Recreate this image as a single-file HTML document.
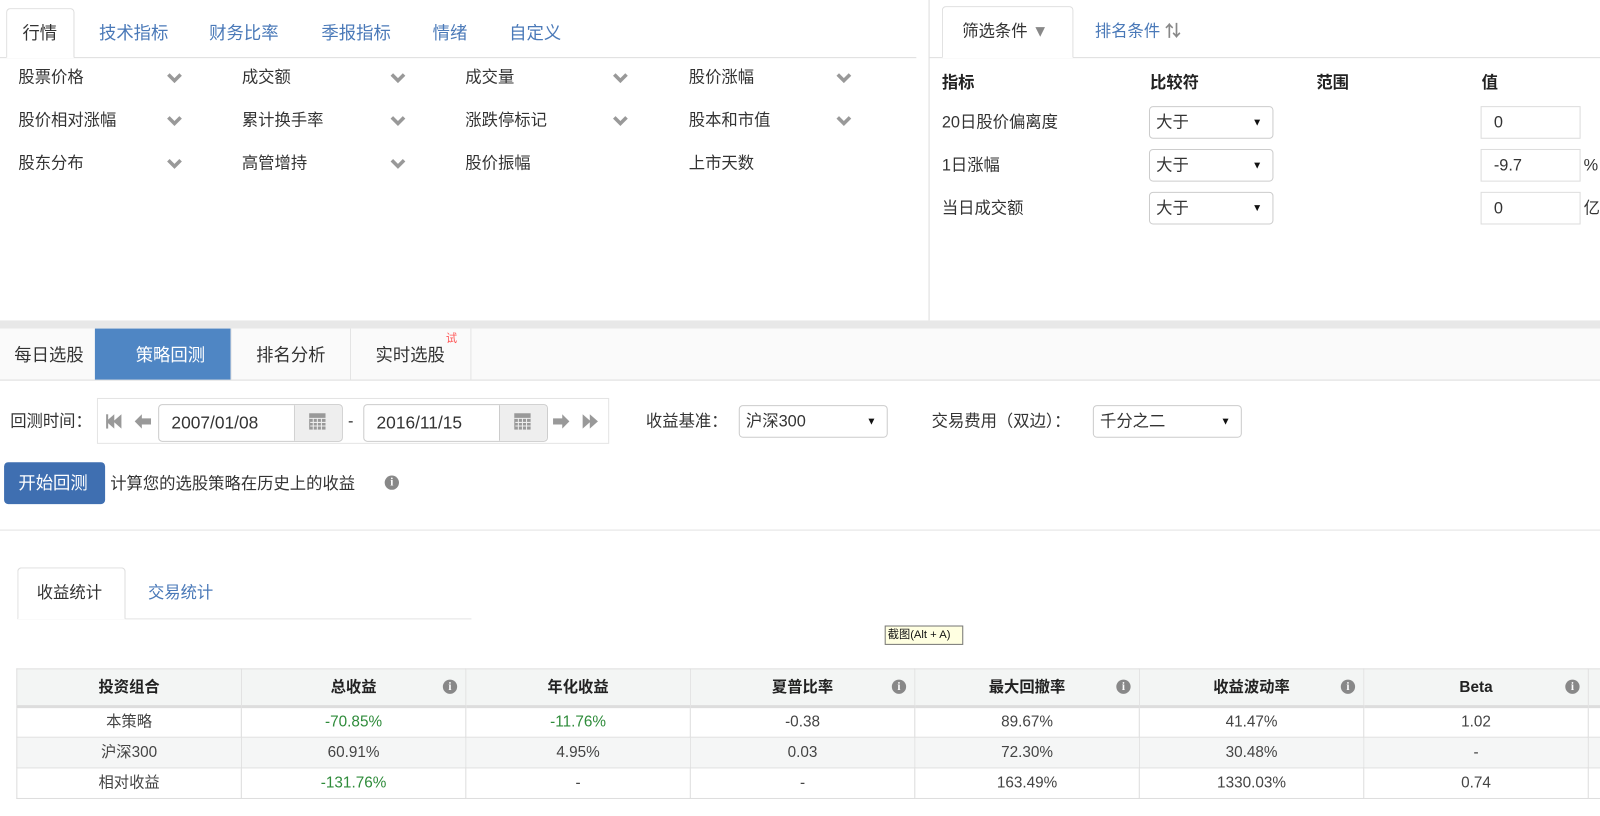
<!DOCTYPE html>
<html><head><meta charset="utf-8">
<style>
*{box-sizing:border-box;margin:0;padding:0}
html,body{width:1600px;height:816px;overflow:hidden;background:#fff}
body{font-family:"Liberation Sans","Noto Sans CJK SC",sans-serif;font-size:16px;color:#333;line-height:1.3}
#w{position:absolute;left:0;top:0;width:1568px;height:800px;transform:scale(1.0204);transform-origin:0 0}
.a{position:absolute;white-space:nowrap}
.blue{color:#4a79b8}
.sel{position:absolute;border:1px solid #ccc;border-radius:4px;background:#fff;height:32px;padding:0 6px;line-height:32px;font-size:16px}
.sel:after{content:"▼";position:absolute;right:10px;top:0;font-size:10px;color:#111}
.inp{position:absolute;border:1px solid #ddd;background:#fff;height:32px;padding:0 12px;line-height:32px}
.info{display:inline-block;width:14px;height:14px;border-radius:50%;background:#888;color:#fff;font-size:11px;font-weight:bold;text-align:center;line-height:14px;font-family:"Liberation Serif",serif}
table{position:absolute;left:16px;top:655px;border-collapse:collapse;font-size:15px;table-layout:fixed;width:1760px}
td,th{border:1px solid #ddd;width:220px;text-align:center;height:30px;position:relative}
th{background:#f3f5f4;height:37px;font-weight:bold;color:#222;border-bottom:3px solid #ddd}
th .info{position:absolute;right:8px;top:10px}
tr.g td{background:#f5f6f6}
.gr{color:#2e8b3a}
td{color:#444}
</style></head><body><div id="w">
<div class="a" style="left:6px;top:8px;width:67px;height:49px;border:1px solid #ddd;border-bottom:1px solid #fff;border-radius:4px 4px 0 0;background:#fff;z-index:2"></div>
<div class="a" style="left:0;top:56px;width:898px;height:1px;background:#ddd"></div>
<div class="a" style="left:22px;top:22px;z-index:3;font-size:17px">行情</div>
<div class="a blue" style="left:97px;top:22px;font-size:17px">技术指标</div>
<div class="a blue" style="left:205px;top:22px;font-size:17px">财务比率</div>
<div class="a blue" style="left:315px;top:22px;font-size:17px">季报指标</div>
<div class="a blue" style="left:424px;top:22px;font-size:17px">情绪</div>
<div class="a blue" style="left:499px;top:22px;font-size:17px">自定义</div>
<div class="a" style="left:910px;top:0;width:1px;height:314px;background:#ddd"></div>
<div class="a" style="left:18px;top:67px">股票价格</div>
<div class="a" style="left:237px;top:67px">成交额</div>
<div class="a" style="left:456px;top:67px">成交量</div>
<div class="a" style="left:675px;top:67px">股价涨幅</div>
<div class="a" style="left:18px;top:109px">股价相对涨幅</div>
<div class="a" style="left:237px;top:109px">累计换手率</div>
<div class="a" style="left:456px;top:109px">涨跌停标记</div>
<div class="a" style="left:675px;top:109px">股本和市值</div>
<div class="a" style="left:18px;top:151px">股东分布</div>
<div class="a" style="left:237px;top:151px">高管增持</div>
<div class="a" style="left:456px;top:151px">股价振幅</div>
<div class="a" style="left:675px;top:151px">上市天数</div>
<svg class="a" style="left:0;top:0" width="900" height="200">
<g fill="none" stroke="#999" stroke-width="3.5">
<path d="M165 73 l6 6 l6 -6"/><path d="M384 73 l6 6 l6 -6"/><path d="M602 73 l6 6 l6 -6"/><path d="M821 73 l6 6 l6 -6"/>
<path d="M165 115 l6 6 l6 -6"/><path d="M384 115 l6 6 l6 -6"/><path d="M602 115 l6 6 l6 -6"/><path d="M821 115 l6 6 l6 -6"/>
<path d="M165 157 l6 6 l6 -6"/><path d="M384 157 l6 6 l6 -6"/>
</g></svg>
<div class="a" style="left:923px;top:6px;width:129px;height:51px;border:1px solid #ddd;border-bottom:1px solid #fff;border-radius:4px 4px 0 0;background:#fff;z-index:2"></div>
<div class="a" style="left:911px;top:56px;width:689px;height:1px;background:#ddd"></div>
<div class="a" style="left:943px;top:22px;z-index:3">筛选条件 <span style="color:#888">▼</span></div>
<div class="a blue" style="left:1073px;top:22px">排名条件 <span style="color:#888;font-weight:bold">⇅</span></div>
<div class="a" style="left:923px;top:72px;font-weight:bold;color:#222">指标</div>
<div class="a" style="left:1127px;top:72px;font-weight:bold;color:#222">比较符</div>
<div class="a" style="left:1290px;top:72px;font-weight:bold;color:#222">范围</div>
<div class="a" style="left:1452px;top:72px;font-weight:bold;color:#222">值</div>
<div class="a" style="left:923px;top:111px">20日股价偏离度</div>
<div class="a" style="left:923px;top:153px">1日涨幅</div>
<div class="a" style="left:923px;top:195px">当日成交额</div>
<div class="sel" style="left:1126px;top:104px;width:122px">大于</div>
<div class="sel" style="left:1126px;top:146px;width:122px">大于</div>
<div class="sel" style="left:1126px;top:188px;width:122px">大于</div>
<div class="inp" style="left:1451px;top:104px;width:98px">0</div>
<div class="inp" style="left:1451px;top:146px;width:98px">-9.7</div>
<div class="inp" style="left:1451px;top:188px;width:98px">0</div>
<div class="a" style="left:1552px;top:153px">%</div>
<div class="a" style="left:1552px;top:195px">亿</div>
<div class="a" style="left:0;top:314px;width:1600px;height:8px;background:#e8e8e8"></div>
<div class="a" style="left:0;top:322px;width:1600px;height:51px;background:#fafafa;border-bottom:1px solid #ddd"></div>
<div class="a" style="left:93px;top:322px;width:133px;height:50px;background:#4f86c4"></div>
<div class="a" style="left:226px;top:322px;width:1px;height:50px;background:#e4e4e4"></div>
<div class="a" style="left:343px;top:322px;width:1px;height:50px;background:#e4e4e4"></div>
<div class="a" style="left:461px;top:322px;width:1px;height:50px;background:#e4e4e4"></div>
<div class="a" style="left:14px;top:338px;font-size:17px">每日选股</div>
<div class="a" style="left:133px;top:338px;font-size:17px;color:#fff">策略回测</div>
<div class="a" style="left:251px;top:338px;font-size:17px">排名分析</div>
<div class="a" style="left:368px;top:338px;font-size:17px">实时选股</div>
<div class="a" style="left:437px;top:325px;font-size:11px;color:#f55">试</div>
<div class="a" style="left:10px;top:404px">回测时间：</div>
<div class="a" style="left:95px;top:390px;width:502px;height:45px;border:1px solid #e4e4e4"></div>
<svg class="a" style="left:100px;top:400px" width="55" height="26"><g fill="#999"><path d="M4 13 l8 -7 v14z M11 13 l8 -7 v14z"/><rect x="4" y="6" width="2" height="14"/><path d="M32 13 l7 -7 v4 h9 v6 h-9 v4z"/></g></svg>
<div class="a" style="left:155px;top:396px;width:181px;height:37px;border:1px solid #ccc;border-radius:4px;background:#fff;padding:0 12px;line-height:35px;font-size:17px">2007/01/08</div>
<div class="a" style="left:288px;top:397px;width:47px;height:35px;background:#eee;border-left:1px solid #ccc;border-radius:0 4px 4px 0"></div>
<div class="a" style="left:341px;top:404px">-</div>
<div class="a" style="left:356px;top:396px;width:181px;height:37px;border:1px solid #ccc;border-radius:4px;background:#fff;padding:0 12px;line-height:35px;font-size:17px">2016/11/15</div>
<div class="a" style="left:489px;top:397px;width:47px;height:35px;background:#eee;border-left:1px solid #ccc;border-radius:0 4px 4px 0"></div>
<svg class="a" style="left:302px;top:404px" width="20" height="20"><rect x="1" y="1" width="16" height="16" fill="#999"/><g stroke="#eee" stroke-width="1"><path d="M1 6h16M2 10h15M2 13.5h15M5 6v11M9 6v11M13 6v11"/></g></svg>
<svg class="a" style="left:503px;top:404px" width="20" height="20"><rect x="1" y="1" width="16" height="16" fill="#999"/><g stroke="#eee" stroke-width="1"><path d="M1 6h16M2 10h15M2 13.5h15M5 6v11M9 6v11M13 6v11"/></g></svg>
<svg class="a" style="left:540px;top:400px" width="55" height="26"><g fill="#999"><path d="M18 13 l-7 -7 v4 h-9 v6 h9 v4z"/><path d="M31 6 l8 7 l-8 7z M38 6 l8 7 l-8 7z"/></g></svg>
<div class="a" style="left:633px;top:404px">收益基准：</div>
<div class="sel" style="left:724px;top:397px;width:146px">沪深300</div>
<div class="a" style="left:913px;top:404px">交易费用（双边）：</div>
<div class="sel" style="left:1071px;top:397px;width:146px">千分之二</div>
<div class="a" style="left:4px;top:453px;width:99px;height:41px;background:#3f6fb1;border-radius:4px;color:#fff;font-size:17px;line-height:41px;padding-left:14px">开始回测</div>
<div class="a" style="left:108px;top:465px">计算您的选股策略在历史上的收益</div>
<span class="info a" style="left:377px;top:466px">i</span>
<div class="a" style="left:0;top:519px;width:1600px;height:1px;background:#e2e2e2"></div>
<div class="a" style="left:17px;top:556px;width:106px;height:51px;border:1px solid #ddd;border-bottom:1px solid #fff;border-radius:4px 4px 0 0;background:#fff;z-index:2"></div>
<div class="a" style="left:17px;top:606px;width:445px;height:1px;background:#e4e4e4"></div>
<div class="a" style="left:36px;top:572px;z-index:3">收益统计</div>
<div class="a blue" style="left:145px;top:572px">交易统计</div>
<div class="a" style="left:867px;top:613px;width:77px;height:19px;background:#ffffe1;border:1px solid #777;font-size:11px;padding:2px 2px;color:#111;line-height:1.2">截图(Alt + A)</div>
<table>
<tr><th>投资组合</th><th>总收益<span class="info">i</span></th><th>年化收益</th><th>夏普比率<span class="info">i</span></th><th>最大回撤率<span class="info">i</span></th><th>收益波动率<span class="info">i</span></th><th>Beta<span class="info">i</span></th><th></th></tr>
<tr><td>本策略</td><td class="gr">-70.85%</td><td class="gr">-11.76%</td><td>-0.38</td><td>89.67%</td><td>41.47%</td><td>1.02</td><td></td></tr>
<tr class="g"><td>沪深300</td><td>60.91%</td><td>4.95%</td><td>0.03</td><td>72.30%</td><td>30.48%</td><td>-</td><td></td></tr>
<tr><td>相对收益</td><td class="gr">-131.76%</td><td>-</td><td>-</td><td>163.49%</td><td>1330.03%</td><td>0.74</td><td></td></tr>
</table>
</div></body></html>
